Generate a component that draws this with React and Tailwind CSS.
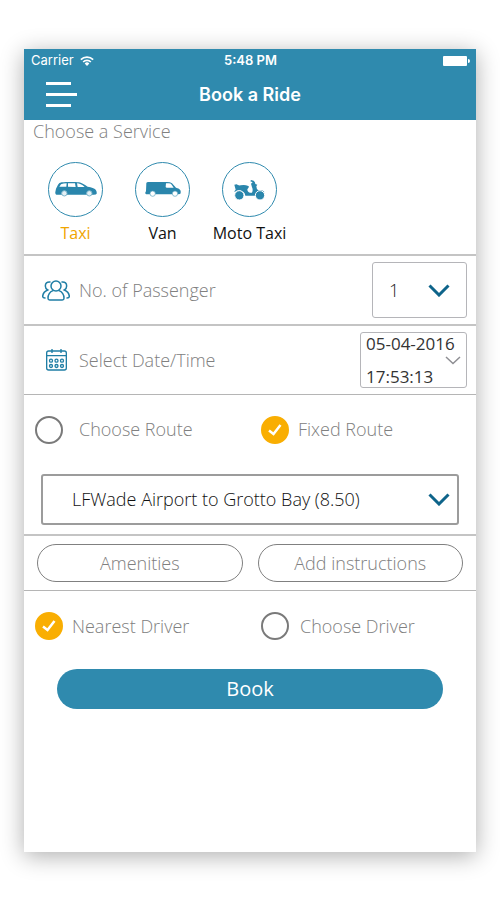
import React from 'react';

const services = [
  { id: 'taxi', label: 'Taxi', Icon: TaxiIcon },
  { id: 'van', label: 'Van', Icon: VanIcon },
  { id: 'moto', label: 'Moto Taxi', Icon: MotoIcon },
];

function WifiIcon() {
  return (
    <svg viewBox="0 0 42 30" className="w-[14px] h-[10px]" fill="none" stroke="#fff" strokeWidth="5" aria-hidden="true">
      <path d="M2.500 11a26 26 0 0 1 37 0" />
      <path d="M9.500 18a16 16 0 0 1 23 0" />
      <path d="M21 30l-7-7.500a10 10 0 0 1 14 0z" fill="#fff" stroke="none" />
    </svg>
  );
}

function BatteryIcon() {
  return (
    <svg viewBox="0 0 27 10" className="w-[27px] h-[10px]" fill="#fff" aria-hidden="true">
      <rect x="0" y="0" width="24" height="10" rx="1" />
      <path d="M25 3q2 0 2 2t-2 2z" />
    </svg>
  );
}

function TaxiIcon() {
  return (
    <svg viewBox="0 0 126 45" className="w-[42px] h-[15px]" fill="#2a86ac" aria-hidden="true">
      <path d="M3 20L9 8Q12 2 20 1Q50-2 72 1Q82 3 98 14Q116 17 122 23Q126 28 125 35Q124 38 116 38H4Q0 37 1 30Z" />
      <path d="M13 14L18 7Q25 4 35 4L34 14ZM39 4H60L62 15L39 14ZM66 4Q77 4 89 15L68 15Z" fill="#fff" />
      <g fill="#e4f0f5" stroke="#7fb6cc" strokeWidth="3">
        <circle cx="28" cy="34" r="8" />
        <circle cx="103" cy="34" r="8" />
      </g>
    </svg>
  );
}

function VanIcon() {
  return (
    <svg viewBox="0 0 108 45" className="w-[36px] h-[15px]" fill="#2a86ac" aria-hidden="true">
      <path d="M4 3Q5 0 10 0H66Q76 0 81 4L93 17Q104 19 107 26V34Q106 37 100 37H4Q0 37 1 31L3 28Z" />
      <path d="M63 4H71Q77 4 80 8L86 17H66Q62 17 62 14Z" fill="#fff" />
      <g fill="#fff" stroke="#5aa3be" strokeWidth="2">
        <circle cx="23" cy="35" r="8" />
        <circle cx="90" cy="35" r="8" />
      </g>
    </svg>
  );
}

function MotoIcon() {
  return (
    <svg viewBox="0 0 93 60" className="w-[31px] h-[20px]" fill="#2a86ac" aria-hidden="true">
      <path d="M1 14L8 13Q12 17 20 16Q32 13 43 18Q46 20 43 24L40 28Q40 37 48 38L54 38Q58 30 54 22L51 11L56 7L49 4L51 0L59 2Q64 6 64 12L70 14L67 19Q67 27 73 31Q84 28 91 36L88 40Q78 34 70 42L64 47H34Q32 34 16 31Q6 31 2 36Q0 34 5 29Z" />
      <g stroke="#fff" strokeWidth="3">
        <circle cx="16" cy="46" r="14" />
        <circle cx="78" cy="46" r="14" />
      </g>
    </svg>
  );
}

function PassengersIcon() {
  return (
    <svg viewBox="0 0 84 63" className="w-[28px] h-[21px]" fill="none" stroke="#1f7ea5" strokeWidth="4.500" strokeLinecap="round" aria-hidden="true">
      <circle cx="42" cy="18" r="15" />
      <path d="M33 32Q18 38 18 55Q18 60 23 60H61Q66 60 66 55Q66 38 51 32" />
      <path d="M24 6Q10 5 10 18Q10 26 17 30Q3 36 2 49Q2 54 9 54" />
      <path d="M60 6Q74 5 74 18Q74 26 67 30Q81 36 82 49Q82 54 75 54" />
    </svg>
  );
}

function CalendarIcon() {
  return (
    <svg viewBox="0 0 63 66" className="w-[21px] h-[22px]" fill="none" stroke="#1f7ea5" strokeWidth="4" aria-hidden="true">
      <rect x="2" y="6" width="59" height="57" rx="6" />
      <path d="M2 20H61M18 0V12M45 0V12" />
      <circle cx="15" cy="35" r="4.500" />
      <circle cx="31.500" cy="35" r="4.500" />
      <circle cx="48" cy="35" r="4.500" />
      <circle cx="15" cy="51" r="4.500" />
      <circle cx="31.500" cy="51" r="4.500" />
      <circle cx="48" cy="51" r="4.500" />
    </svg>
  );
}

function Chevron({ className }) {
  return (
    <svg viewBox="0 0 22 13" className={className} fill="none" stroke="#0e648a" strokeWidth="3" aria-hidden="true">
      <path d="M1.500 1.500L11 11L20.500 1.500" />
    </svg>
  );
}

function RadioOption({ name, label, defaultChecked, className }) {
  return (
    <label className={`relative flex items-center pl-[11px] text-[18px] font-light text-[#808080] ${className}`}>
      <input
        type="radio"
        name={name}
        defaultChecked={defaultChecked}
        className="peer size-7 shrink-0 appearance-none rounded-full border-2 border-[#7a7a7a] checked:border-[#f9ae02] checked:bg-[#f9ae02]"
      />
      <svg viewBox="0 0 28 28" className="pointer-events-none absolute left-[11px] hidden size-7 peer-checked:block" fill="none" stroke="#fff" strokeWidth="2.500" aria-hidden="true">
        <path d="M8 14.500L12.500 18L19.500 9" />
      </svg>
      {label}
    </label>
  );
}

export default function App() {
  return (
    <div className="min-h-screen bg-white px-6 py-12 pt-[49px] font-['Open_Sans',sans-serif]">
      <main className="min-h-[803px] bg-white shadow-[0_4px_22px_rgba(0,0,0,0.32)]">
        <header className="h-[71px] bg-[#2f8aae] font-[Inter,sans-serif] text-white">
          <div className="grid h-6 grid-cols-3 items-center pr-1.5 pl-[7px] text-[13px]">
            <div className="flex items-center gap-1.5">
              <span>Carrier</span>
              <WifiIcon />
            </div>
            <span className="text-center font-semibold">5:48 PM</span>
            <div className="flex justify-end">
              <BatteryIcon />
            </div>
          </div>
          <div className="grid h-[47px] grid-cols-[1fr_auto_1fr] items-center pb-1">
            <button type="button" aria-label="Menu" className="ml-[22px] flex w-[31px] flex-col gap-2">
              <span className="h-[3px] w-[25px] bg-white" />
              <span className="h-[3px] w-[31px] bg-white" />
              <span className="h-[3px] w-[25px] bg-white" />
            </button>
            <h1 className="text-[18px] font-semibold">Book a Ride</h1>
          </div>
        </header>

        <section className="border-b-2 border-[#c4c4c4] pb-[9px]">
          <h2 className="pl-[9px] text-[18px] leading-[22px] font-light text-[#808080]">Choose a Service</h2>
          <div className="flex pt-5 pl-2">
            {services.map(({ id, label, Icon }) => (
              <button key={id} type="button" className="flex w-[87px] flex-col items-center gap-1">
                <span className="flex size-[55px] items-center justify-center rounded-full border border-[#2f8aae]">
                  <Icon />
                </span>
                <span className={`text-[16px] leading-6 font-medium whitespace-nowrap ${id === 'taxi' ? 'text-[#f0a500]' : 'text-[#111]'}`}>
                  {label}
                </span>
              </button>
            ))}
          </div>
        </section>

        <section className="flex h-[70px] items-center border-b-2 border-[#c4c4c4] pr-[9px] pl-[18px]">
          <PassengersIcon />
          <label htmlFor="passengers" className="flex-1 pl-[9px] text-[18px] font-light text-[#808080]">No. of Passenger</label>
          <div className="relative">
            <select id="passengers" className="h-14 w-[95px] appearance-none rounded-[3px] border border-[#b5b5b9] pl-4 text-[18px] font-light text-[#222]">
              <option>1</option>
              <option>2</option>
              <option>3</option>
              <option>4</option>
            </select>
            <Chevron className="pointer-events-none absolute top-[22px] right-[17px] w-[22px] h-[13px]" />
          </div>
        </section>

        <section className="flex h-[69px] items-center border-b border-[#b5b5b5] pr-[9px] pl-[22px]">
          <CalendarIcon />
          <span id="date-label" className="flex-1 pl-3 text-[18px] font-light text-[#808080]">Select Date/Time</span>
          <button type="button" aria-describedby="date-label" className="relative h-14 w-[107px] rounded-[3px] border border-[#b5b5b9] pl-[5px] text-left text-[17px] leading-[33px] text-[#333]">
            <span className="-my-2 block">
              05-04-2016
              <br />
              17:53:13
            </span>
            <svg viewBox="0 0 16 9" className="absolute top-[23px] right-[5px] w-4 h-[9px]" fill="none" stroke="#8e8e93" strokeWidth="1.500" aria-hidden="true">
              <path d="M1 1L8 7.500L15 1" />
            </svg>
          </button>
        </section>

        <section className="border-b-2 border-[#c4c4c4] pb-[9px]">
          <div className="grid h-[79px] grid-cols-2 items-center pb-2.5">
            <RadioOption name="route" label="Choose Route" className="gap-4" />
            <RadioOption name="route" label="Fixed Route" defaultChecked className="gap-[9px]" />
          </div>
          <div className="relative mx-[17px]">
            <select aria-label="Fixed route" className="h-[51px] w-full appearance-none rounded-[3px] border-2 border-[#9c9c9c] pl-[29px] text-[18px] font-light text-[#111]">
              <option>LFWade Airport to Grotto Bay (8.50)</option>
            </select>
            <Chevron className="pointer-events-none absolute top-[19px] right-[9px] w-[22px] h-[13px]" />
          </div>
        </section>

        <section className="flex gap-[15px] border-b border-[#b5b5b5] px-[13px] py-2 text-[18px] text-[#808080]">
          <button type="button" className="h-[38px] flex-1 rounded-full border border-[#808080] font-light">Amenities</button>
          <button type="button" className="h-[38px] flex-1 rounded-full border border-[#808080] font-light">Add instructions</button>
        </section>

        <section className="grid h-[78px] grid-cols-2 items-center pb-2">
          <RadioOption name="driver" label="Nearest Driver" defaultChecked className="gap-[9px]" />
          <RadioOption name="driver" label="Choose Driver" className="gap-[11px]" />
        </section>

        <div className="px-[33px]">
          <button type="button" className="h-10 w-full rounded-full bg-[#2f8aae] text-[20px] text-white">Book</button>
        </div>
      </main>
    </div>
  );
}
